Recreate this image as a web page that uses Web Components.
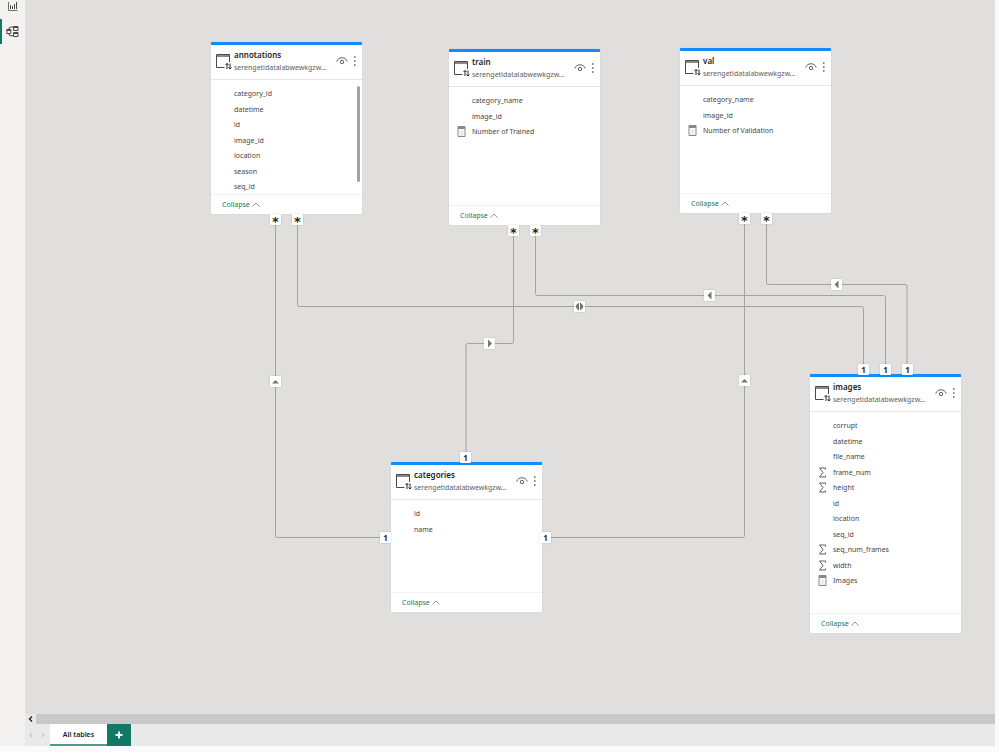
<!DOCTYPE html>
<html lang="en">
<head>
<meta charset="utf-8">
<title>Model view</title>
<style>
    html, body { height: 100%; margin: 0; }
    body {
        --accent: #117865;
        --blue: #118dff;
        --rail: #f3f2f1;
        --canvas: #e0dfdd;
        --ink: #323130;
        --line: #a3a2a1;
        font-family: "Noto Sans", "Open Sans", sans-serif;
        font-size: 7px;
        color: var(--ink);
        background: #fbfbfb;
    }
</style>
</head>
<body>
<model-view>
    <view-rail slot="rail"></view-rail>

    <model-canvas>
        <table-card name="annotations" style="left: 186px; top: 42px; height: 172px" scrolls>
            <field-item>category_id</field-item>
            <field-item>datetime</field-item>
            <field-item>id</field-item>
            <field-item>image_id</field-item>
            <field-item>location</field-item>
            <field-item>season</field-item>
            <field-item>seq_id</field-item>
        </table-card>
        <table-card name="train" style="left: 424px; top: 49px; height: 176px">
            <field-item>category_name</field-item>
            <field-item>image_id</field-item>
            <field-item kind="measure">Number of Trained</field-item>
        </table-card>
        <table-card name="val" style="left: 655px; top: 48px; height: 165px">
            <field-item>category_name</field-item>
            <field-item>image_id</field-item>
            <field-item kind="measure">Number of Validation</field-item>
        </table-card>
        <table-card name="categories" style="left: 366px; top: 462px; height: 150px">
            <field-item>id</field-item>
            <field-item>name</field-item>
        </table-card>
        <table-card name="images" style="left: 785px; top: 374px; height: 259px">
            <field-item>corrupt</field-item>
            <field-item>datetime</field-item>
            <field-item>file_name</field-item>
            <field-item kind="sum">frame_num</field-item>
            <field-item kind="sum">height</field-item>
            <field-item>id</field-item>
            <field-item>location</field-item>
            <field-item>seq_id</field-item>
            <field-item kind="sum">seq_num_frames</field-item>
            <field-item kind="sum">width</field-item>
            <field-item kind="measure">Images</field-item>
        </table-card>

        <relation-pin kind="many" style="left: 245px; top: 214px"></relation-pin>
        <relation-pin kind="many" style="left: 267px; top: 214px"></relation-pin>
        <relation-pin kind="many" style="left: 483px; top: 225px"></relation-pin>
        <relation-pin kind="many" style="left: 505px; top: 225px"></relation-pin>
        <relation-pin kind="many" style="left: 714px; top: 213px"></relation-pin>
        <relation-pin kind="many" style="left: 736px; top: 213px"></relation-pin>
        <relation-pin kind="one" style="left: 355px; top: 532px"></relation-pin>
        <relation-pin kind="one" style="left: 515px; top: 532px"></relation-pin>
        <relation-pin kind="one" style="left: 435px; top: 452px"></relation-pin>
        <relation-pin kind="one" style="left: 833px; top: 364px"></relation-pin>
        <relation-pin kind="one" style="left: 855px; top: 364px"></relation-pin>
        <relation-pin kind="one" style="left: 877px; top: 364px"></relation-pin>
        <relation-pin kind="up" style="left: 245px; top: 376px"></relation-pin>
        <relation-pin kind="up" style="left: 714px; top: 375px"></relation-pin>
        <relation-pin kind="right" style="left: 459px; top: 338px"></relation-pin>
        <relation-pin kind="left" style="left: 679px; top: 290px"></relation-pin>
        <relation-pin kind="left" style="left: 806px; top: 279px"></relation-pin>
        <relation-pin kind="both" style="left: 549px; top: 301px"></relation-pin>
    </model-canvas>

    <layout-tabs slot="tabs">All tables</layout-tabs>
</model-view>

<script>
/**
 * Page frame: icon rail on the left, canvas above the layout tabs
 */
class ModelView extends HTMLElement {
    constructor() {
        super();
        this.attachShadow({ mode: 'open' });
        this.shadowRoot.innerHTML = `
        <style>
            :host { display: flex; box-sizing: border-box; height: 100vh; padding: 0 4px 6px 0; }
            main { flex: 1; min-width: 0; display: flex; flex-direction: column; }
        </style>
        <slot name="rail"></slot>
        <main>
            <slot></slot>
            <slot name="tabs"></slot>
        </main>
        `;
    }
}

class ViewRail extends HTMLElement {
    constructor() {
        super();
        this.attachShadow({ mode: 'open' });
        this.shadowRoot.innerHTML = `
        <style>
            :host { display: block; flex: 0 0 25px; background: var(--rail); }
            nav { display: flex; flex-direction: column; }
            button {
                display: grid; place-items: center; box-sizing: border-box;
                width: 25px; height: 25px; padding: 0 2px 0 0;
                border: 0; border-left: 2px solid transparent; background: none; color: #4a4948;
            }
            button:first-child { height: 19px; padding-bottom: 7px; }
            button.active { border-left-color: var(--accent); }
            svg { display: block; fill: none; stroke: currentColor; }
        </style>
        <nav>
            <button aria-label="Report view">
                <svg width="10" height="10" viewBox="0 0 10 10"><path d="M.5 1v8.500h9" stroke-width=".8"/><path d="M2.500 4v4M4.500 5v3M6.500 3v5M8.500 1v7" stroke-width="1"/></svg>
            </button>
            <button class="active" aria-label="Model view">
                <svg width="13" height="13" viewBox="0 0 13 13"><path d="M.8 4.500h4v4h-4zM.8 5.500h4M7.500 1.500h4.500v4H7.500zM7.500 2.500H12M7.500 7.500h4.500v4H7.500zM7.500 8.500H12M3 4.500V3l2-1h2.500M3 8.500V10l2 .8h2.500"/></svg>
            </button>
        </nav>
        `;
    }
}

class ModelCanvas extends HTMLElement {
    constructor() {
        super();
        this.attachShadow({ mode: 'open' });
        this.shadowRoot.innerHTML = `
        <style>
            :host { display: block; position: relative; flex: 1; min-height: 0; overflow: hidden; background: var(--canvas); }
            svg { position: absolute; inset: 0; width: 100%; height: 100%; fill: none; stroke: var(--line); stroke-width: 1; }
        </style>
        <svg aria-hidden="true">
            <path d="M250.500 214V535.500q0 2 2 2H366"/>
            <path d="M272.500 214V304.500q0 2 2 2H836.500q2 0 2 2V374"/>
            <path d="M488.500 225V341.500q0 2-2 2H443q-2 0-2 2V462"/>
            <path d="M510.500 225V293.500q0 2 2 2H858.500q2 0 2 2V374"/>
            <path d="M719.500 213V535.500q0 2-2 2H517"/>
            <path d="M741.500 213V282.500q0 2 2 2H880q2 0 2 2V374"/>
        </svg>
        <slot></slot>
        `;
    }
}

class TableCard extends HTMLElement {
    constructor() {
        super();
        this.attachShadow({ mode: 'open' });
    }

    connectedCallback() {
        this.render();
    }

    render() {
        this.shadowRoot.innerHTML = `
        <style>
            :host {
                position: absolute; display: flex; flex-direction: column; box-sizing: border-box;
                width: 151px; border-top: 3px solid var(--blue); border-radius: 1px; background: #fff;
                box-shadow: 0 0 1px #0003;
            }
            header { display: flex; align-items: center; box-sizing: border-box; height: 35px; padding: 0 5px 2px; border-bottom: 1px solid #e6e5e4; }
            .table { margin-right: 2px; }
            .title { flex: 1; min-width: 0; }
            h2, p { margin: 0; white-space: nowrap; }
            h2 { font-size: 8px; line-height: 13px; font-weight: 600; color: #252423; }
            p { font-size: 7px; line-height: 13px; color: #605e5c; }
            button { display: block; padding: 0; border: 0; background: none; font: inherit; color: #605e5c; }
            .more { margin-left: 5px; }
            svg { display: block; fill: none; stroke: currentColor; }
            .fields { display: flex; flex: 1; min-height: 0; overflow: hidden; padding: 6px 2px 0 8px; }
            .list { flex: 1; }
            .bar { width: 3px; height: 96px; border-radius: 2px; background: #a3a2a0; }
            footer { display: flex; align-items: center; box-sizing: border-box; height: 20px; padding-left: 11px; border-top: 1px solid #f3f2f1; }
            footer button { display: flex; align-items: center; gap: 2px; color: var(--accent); line-height: 12px; }
            footer svg { color: #7a7877; }
        </style>
        <header>
            <svg class="table" width="16" height="18" viewBox="0 0 16 18"><path d="M8.500 15.500H.5V2.500h13v7.500" stroke="#4a4948"/><path d="M1 4h12" stroke="#8a8886" stroke-width="2"/><path d="M11 17v-5.500M9.500 13 11 11.500l1.500 1.500M14 11.500V17M12.500 15.500 14 17l1.500-1.500" stroke="#252423"/></svg>
            <div class="title">
                <h2>${this.getAttribute('name')}</h2>
                <p>serengetidatalabwewkgzw...</p>
            </div>
            <button aria-label="Hide table"><svg width="12" height="10" viewBox="0 0 12 10"><path d="M.8 5.500C2 .5 10 .5 11.200 5.500" /><circle cx="6" cy="6" r="1.700"/></svg></button>
            <button class="more" aria-label="More options"><svg width="4" height="12" viewBox="0 0 4 12"><path d="M1 2h1.500M1 6h1.500M1 10h1.500" stroke-width="1.500"/></svg></button>
        </header>
        <div class="fields">
            <div class="list" role="list"><slot></slot></div>
            ${this.hasAttribute('scrolls') ? '<div class="bar"></div>' : ''}
        </div>
        <footer>
            <button>Collapse <svg width="8" height="6" viewBox="0 0 8 6"><path d="m.5 4.500 3.500-3.500 3.500 3.500" stroke-width=".8"/></svg></button>
        </footer>
        `;
    }
}

const FIELD_ICONS = {
    sum: '<svg width="9" height="11" viewBox="0 0 9 11"><path d="M7.500 2.500V1h-6l3.500 4.500-3.500 4.500h6V8.500"/></svg>',
    measure: '<svg width="9" height="11" viewBox="0 0 9 11"><path d="M1 .5h7v10H1z" stroke="#8a8886"/><path d="M1 2h7" stroke="#8a8886" stroke-width="2"/><path d="M2.500 5h4M2.500 7h4M2.500 9h4" stroke-width=".8" stroke-dasharray="1 .5" opacity=".4"/></svg>'
};

class FieldItem extends HTMLElement {
    constructor() {
        super();
        this.attachShadow({ mode: 'open' });
    }

    connectedCallback() {
        this.setAttribute('role', 'listitem');
        this.shadowRoot.innerHTML = `
        <style>
            :host { display: flex; align-items: center; gap: 6px; height: 15px; line-height: 15px; color: #484644; white-space: nowrap; }
            :host(:nth-child(even)) { height: 16px; }
            .icon { flex: 0 0 9px; }
            svg { display: block; fill: none; stroke: #605e5c; }
        </style>
        <span class="icon">${FIELD_ICONS[this.getAttribute('kind')] || ''}</span>
        <slot></slot>
        `;
    }
}

const arrow = (d) => `<svg width="9" height="9" viewBox="0 0 9 9"><path d="${d}"/></svg>`;

const PINS = {
    many: '<span class="many">*</span>',
    one: '<span>1</span>',
    up: arrow('M1 6.500 4.500 3 8 6.500z'),
    left: arrow('M6.500 .5 2.500 4.500 6.500 8.500z'),
    right: arrow('M3 .5 7 4.500 3 8.500z'),
    both: arrow('M4 .5Q1.500 2 .5 4.500 1.500 7 4 8.500zM5 .5Q7.500 2 8.500 4.500 7.500 7 5 8.500z')
};

class RelationPin extends HTMLElement {
    constructor() {
        super();
        this.attachShadow({ mode: 'open' });
    }

    connectedCallback() {
        this.shadowRoot.innerHTML = `
        <style>
            :host {
                position: absolute; display: flex; justify-content: center; align-items: center; width: 11px; height: 11px;
                border-radius: 1px; background: #fff; box-shadow: 0 0 2px #0003;
                font-size: 8px; line-height: 11px; font-weight: 700; color: #252423;
            }
            .many { font-family: "DejaVu Sans", sans-serif; font-size: 13px; padding-top: 4px; }
            svg { display: block; fill: #767473; }
        </style>
        ${PINS[this.getAttribute('kind')]}
        `;
    }
}

class LayoutTabs extends HTMLElement {
    constructor() {
        super();
        this.attachShadow({ mode: 'open' });
        this.shadowRoot.innerHTML = `
        <style>
            :host { display: block; background: #e9e9e9; }
            .scroll { display: flex; height: 10px; }
            .scroll span { flex: 1; background: #c8c8c8; }
            .tabs { display: flex; height: 22px; }
            button { display: grid; place-items: center; padding: 0; border: 0; background: none; font: inherit; color: #252423; }
            .scroll button { width: 11px; }
            .step { width: 12px; color: #b8b7b6; }
            .tab {
                box-sizing: border-box; width: 57px; margin-left: 1px; border-bottom: 2px solid #4c9a8c;
                background: #fff; font-weight: 600;
            }
            .add { width: 24px; background: var(--accent); color: #fff; }
            svg { display: block; fill: none; stroke: currentColor; }
        </style>
        <div class="scroll">
            <button aria-label="Scroll left"><svg width="6" height="6" viewBox="0 0 6 6"><path d="M4 .5 1.500 3l2.500 2.500" stroke-width="1.400"/></svg></button>
            <span></span>
        </div>
        <div class="tabs">
            <button class="step" aria-label="Previous layout"><svg width="4" height="6" viewBox="0 0 4 6"><path d="M3 1 1 3l2 2"/></svg></button>
            <button class="step" aria-label="Next layout"><svg width="4" height="6" viewBox="0 0 4 6"><path d="m1 1 2 2-2 2"/></svg></button>
            <button class="tab"><slot></slot></button>
            <button class="add" aria-label="Add layout"><svg width="8" height="8" viewBox="0 0 8 8"><path d="M4 .5v7M.5 4h7" stroke-width="1.800"/></svg></button>
        </div>
        `;
    }
}

customElements.define('model-view', ModelView);
customElements.define('view-rail', ViewRail);
customElements.define('model-canvas', ModelCanvas);
customElements.define('table-card', TableCard);
customElements.define('field-item', FieldItem);
customElements.define('relation-pin', RelationPin);
customElements.define('layout-tabs', LayoutTabs);
</script>
</body>
</html>
